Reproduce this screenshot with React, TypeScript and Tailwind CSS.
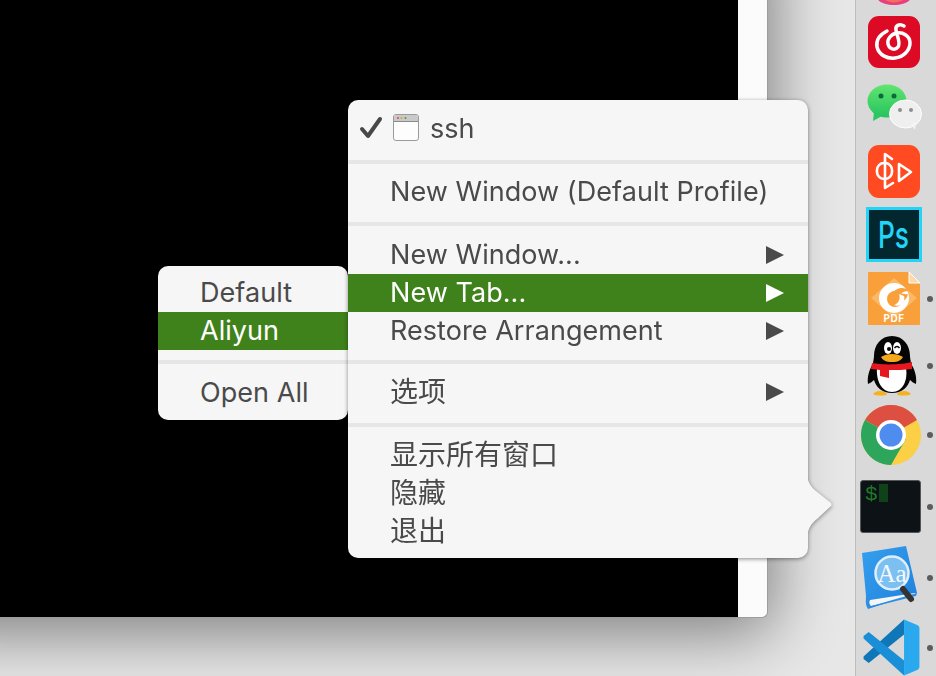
const menuFont = "font-['Inter','Noto_Sans_CJK_SC',sans-serif]";

function Arrow() {
  return (
    <svg width="18" height="18" viewBox="0 0 18 18" className="fill-current">
      <polygon points="0,0 18,9 0,18" />
    </svg>
  );
}

function MenuRow({ label, active, arrow, cjk, raised }: { label: string; active?: boolean; arrow?: boolean; cjk?: boolean; raised?: boolean }) {
  return (
    <div
      className={`flex h-[38px] items-center justify-between pl-[42px] pr-[24px] ${
        active ? 'bg-[#3f821c] text-white' : 'text-[#4a4a4a]'
      }`}
    >
      <span className={`${cjk ? 'text-[28px]' : 'tracking-[0.05px]'} ${raised ? 'mb-[2px]' : ''}`}>{label}</span>
      {arrow && <Arrow />}
    </div>
  );
}

function Separator({ className }: { className: string }) {
  return (
    <div className={className}>
      <div className="h-[4px] bg-[#e6e6e6]" />
    </div>
  );
}

function WindowGlyph() {
  return (
    <svg width="28" height="28" viewBox="0 0 28 28">
      <rect x="1.5" y="0.5" width="25" height="26" rx="2.5" fill="#fdfdfd" stroke="#9b9b9b" />
      <path d="M2 7V3a2 2 0 0 1 2-2h20a2 2 0 0 1 2 2v4z" fill="#c9c9c9" />
      <rect x="2" y="7" width="24" height="1" fill="#8b8b8b" />
      <circle cx="6" cy="4" r="1" fill="#e5484d" />
      <circle cx="9.5" cy="4" r="1" fill="#d9a23a" />
      <circle cx="13.5" cy="4" r="1" fill="#4f9d3a" />
    </svg>
  );
}

function MainMenu() {
  return (
    <div className={`absolute left-[348px] top-[100px] w-[460px] drop-shadow-[0_1px_2px_rgba(0,0,0,0.45)] ${menuFont} text-[27px] leading-none`}>
      <div className="rounded-[10px] bg-[#f6f6f6] pb-[8px] pt-[9px]">
        <div className="flex h-[38px] items-center pl-[11px] text-[#4a4a4a]">
          <svg width="24" height="24" viewBox="0 0 24 24" fill="none" stroke="#484848" strokeWidth="4" strokeLinecap="round" strokeLinejoin="round">
            <path d="M3 13l6 7L21 3" />
          </svg>
          <span className="ml-[9px] flex"><WindowGlyph /></span>
          <span className="ml-[10px]">ssh</span>
        </div>
        <Separator className="h-[25px] pt-[13px]" />
        <MenuRow label="New Window (Default Profile)" />
        <Separator className="h-[26px] pt-[12px]" />
        <MenuRow label="New Window..." arrow raised />
        <MenuRow label="New Tab..." arrow active raised />
        <MenuRow label="Restore Arrangement" arrow raised />
        <Separator className="h-[23px] pt-[10px]" />
        <MenuRow label="选项" arrow cjk />
        <Separator className="h-[25px] pt-[12px]" />
        <MenuRow label="显示所有窗口" cjk />
        <MenuRow label="隐藏" cjk />
        <MenuRow label="退出" cjk />
      </div>
      <svg className="absolute left-[459px] top-[372px]" width="26" height="66" viewBox="0 0 26 66" fill="#f6f6f6">
        <path d="M0 0C0 10 4 15 9 19L24 31Q25 33 24 34L10 47C4 52 1 56 0 66z" />
      </svg>
    </div>
  );
}

function SubMenu() {
  return (
    <div className={`absolute left-[158px] top-[266px] w-[190px] rounded-[10px] bg-[#f6f6f6] pb-[9px] pt-[8px] ${menuFont} text-[27px] leading-none`}>
      <MenuRow label="Default" raised />
      <MenuRow label="Aliyun" active raised />
      <Separator className="h-[23px] pt-[10px]" />
      <MenuRow label="Open All" />
    </div>
  );
}

function TopIcon() {
  return (
    <svg width="38" height="6" viewBox="0 0 38 6" className="ml-[19px]">
      <path d="M0 0C4 4 11 6 19 6S34 4 38 0z" fill="#ea3f7e" />
      <path d="M8 0C12 2 15 3 19 3S26 2 30 0z" fill="#f2705c" />
    </svg>
  );
}

function NeteaseIcon() {
  return (
    <svg width="52" height="52" viewBox="0 0 52 52" fill="none">
      <rect width="52" height="52" rx="11" fill="#dd0a26" />
      <path d="M19 15C11 19 8 25 9 31C11 39 19 43 27 42C36 41 42 34 42 27C42 20 35 16 29 17C23 18 19 23 20 28C21 33 27 35 30 31C33 27 29 20 28 14C27 10 31 7 36 10" stroke="#fff" strokeWidth="3.5" strokeLinecap="round" />
    </svg>
  );
}

function WeChatIcon() {
  return (
    <svg width="56" height="46" viewBox="0 0 56 46">
      <defs>
        <linearGradient id="wechatGreen" x1="0" y1="0" x2="0" y2="1">
          <stop offset="0" stopColor="#62e56f" />
          <stop offset="1" stopColor="#25c35f" />
        </linearGradient>
      </defs>
      <ellipse cx="20" cy="17" rx="19.5" ry="16.5" fill="url(#wechatGreen)" />
      <path d="M7 28l-1 9 9-5z" fill="#2cc763" />
      <circle cx="14" cy="12" r="2.5" fill="#0d6b39" />
      <circle cx="27" cy="12" r="2.5" fill="#0d6b39" />
      <ellipse cx="38.5" cy="30" rx="16" ry="14" fill="#efefef" stroke="#fff" strokeWidth="1" />
      <path d="M44 40l4 6 1-8z" fill="#f4f4f4" />
      <circle cx="33" cy="26" r="2" fill="#8e8e8e" />
      <circle cx="44" cy="26" r="2" fill="#8e8e8e" />
    </svg>
  );
}

function VideoIcon() {
  return (
    <svg width="52" height="53" viewBox="0 0 52 53" fill="none">
      <rect width="52" height="53" rx="11" fill="#ff4a22" />
      <g stroke="#fff" strokeWidth="2.6" strokeLinejoin="round" strokeLinecap="round">
        <rect x="9" y="18" width="15" height="16" rx="7" />
        <path d="M24 14L17 9V43L25 38" />
        <path d="M31 19L43 27 31 36z" />
      </g>
    </svg>
  );
}

function PsIcon() {
  return (
    <svg width="56" height="55" viewBox="0 0 56 55">
      <rect x="1.5" y="1.5" width="53" height="52" fill="#03272f" stroke="#22d4f7" strokeWidth="3" />
      <text x="12" y="41" fontFamily="Inter, sans-serif" fontSize="37" fontWeight="500" fill="#22d4f7" textLength="31" lengthAdjust="spacingAndGlyphs">Ps</text>
    </svg>
  );
}

function PdfIcon() {
  return (
    <svg width="52" height="53" viewBox="0 0 52 53">
      <path d="M0 1a1 1 0 0 1 1-1h40l11 11v41a1 1 0 0 1-1 1H1a1 1 0 0 1-1-1z" fill="#f9a03a" />
      <path d="M41 0l11 11H41z" fill="#fbd9a8" stroke="#fff" strokeWidth="1" />
      <path d="M26 6L49 26 26 46 3 26z" fill="#fbb866" />
      <circle cx="26" cy="26" r="15" fill="#fff" />
      <circle cx="27" cy="27" r="8" fill="#f9a03a" />
      <path d="M25 20C30 15 37 15 41 19C37 19 34 20 33 22C36 21 38 23 40 22C39 27 35 30 32 31C35 26 31 21 25 20z" fill="#f9a03a" />
      <path d="M31 22C33 27 30 32 26 33C32 36 38 30 36 24z" fill="#fff" />
      <text x="26" y="50" textAnchor="middle" fontFamily="Inter, sans-serif" fontSize="10" fontWeight="700" fill="#fff" letterSpacing="0.5">PDF</text>
    </svg>
  );
}

function QqIcon() {
  return (
    <svg width="50" height="60" viewBox="0 0 50 60">
      <path d="M6 58C9 54 17 54 20 58C20 60 8 60 6 58z" fill="#f6b11c" />
      <path d="M44 58C41 54 33 54 30 58C30 60 42 60 44 58z" fill="#f6b11c" />
      <path d="M25 0C36 0 43 9 43 20C43 23 44 25 44 28C48 33 50 42 49 48C47 47 45 46 43 44C41 51 35 57 25 57C15 57 9 51 7 44C5 46 3 47 1 48C0 42 2 33 6 28C6 25 7 23 7 20C7 9 14 0 25 0z" fill="#050505" />
      <path d="M10 32H39C41 44 36 56 25 56C14 56 9 44 10 32z" fill="#fff" />
      <ellipse cx="21" cy="12" rx="4" ry="6" fill="#fff" />
      <ellipse cx="30" cy="12" rx="4" ry="6" fill="#fff" />
      <circle cx="22" cy="13" r="2" fill="#050505" />
      <path d="M27.5 12C29 10 31 10 32.5 12" stroke="#050505" strokeWidth="1.5" fill="none" />
      <path d="M14 21C20 17 30 17 36 21C33 26 28 26 25 26C22 26 17 26 14 21z" fill="#f6a81c" />
      <path d="M5 27C14 29 35 29 45 26L45 33C38 34 28 34 22 34V42L13 40V34C10 34 7 33 4 33z" fill="#e5171f" />
    </svg>
  );
}

function ChromeIcon() {
  return (
    <svg width="60" height="60" viewBox="0 0 60 60">
      <circle cx="30" cy="30" r="30" fill="#fbcf46" />
      <path d="M30 30L4 15A30 30 0 0 1 56 15z" fill="#dc4f41" />
      <path d="M30 30L4 15A30 30 0 0 0 30 60L45 34z" fill="#2da55a" />
      <circle cx="30" cy="30" r="15" fill="#fff" />
      <circle cx="30" cy="30" r="11.5" fill="#4e8cf0" />
    </svg>
  );
}

function TerminalIcon() {
  return (
    <div className="flex h-[53px] w-[61px] items-start gap-[2px] rounded-[3px] border border-[#555] bg-[#0c1215] pl-[4px] pt-[3px] font-['Liberation_Mono',monospace] text-[21px] leading-[22px] text-[#1e7a28]">
      <span className="w-[12px]">$</span>
      <div className="h-[18px] w-[9px] bg-[#0f4218]" />
    </div>
  );
}

function DictIcon() {
  return (
    <svg width="56" height="64" viewBox="0 0 56 64">
      <defs>
        <linearGradient id="dictBlue" x1="0" y1="0" x2="1" y2="1">
          <stop offset="0" stopColor="#35a0ee" />
          <stop offset="1" stopColor="#1f7fdc" />
        </linearGradient>
      </defs>
      <path d="M0 7L44 0 55 47 6 63C3 58 4 55 4 50z" fill="url(#dictBlue)" />
      <path d="M8 54L53 47 54 50 9 60C7 58 7 56 8 54z" fill="#f5f5f5" />
      <path d="M6 62L54 50 55 47 6 61z" fill="#2a8de6" />
      <circle cx="30" cy="27" r="16.5" fill="#7cc0f2" stroke="#dfeefa" strokeWidth="2.5" />
      <text x="30" y="36" textAnchor="middle" fontFamily="Liberation Serif, serif" fontSize="25" fill="#f3f9fe">Aa</text>
      <path d="M41 43L49 53" stroke="#333" strokeWidth="6" strokeLinecap="round" />
    </svg>
  );
}

function VsCodeIcon() {
  return (
    <svg width="57" height="57" viewBox="0 0 100 100">
      <path d="M72 1V27L10 77 1 70V66z" fill="#0f76b8" />
      <path d="M10 23L72 73V99L1 34V30z" fill="#1a8ed6" />
      <path d="M72 1L96 11Q99 13 99 16V84Q99 87 96 89L72 99z" fill="#2aa9ef" />
    </svg>
  );
}

const dot = 'absolute top-1/2 h-[6px] w-[6px] -translate-y-1/2 rounded-full bg-[#5c5c5c]';

function Dock() {
  return (
    <div className="flex h-full w-[81px] shrink-0 flex-col overflow-hidden border-l border-l-[#bdbdbd] bg-[#d9d9d9]">
      <TopIcon />
      <div className="ml-[12px] mt-[11px] flex"><NeteaseIcon /></div>
      <div className="ml-[11px] mt-[16px] flex"><WeChatIcon /></div>
      <div className="ml-[12px] mt-[15px] flex"><VideoIcon /></div>
      <div className="ml-[10px] mt-[9px] flex"><PsIcon /></div>
      <div className="relative ml-[12px] mt-[10px] flex w-[60px]"><PdfIcon /><div className={`${dot} left-[59px]`} /></div>
      <div className="relative ml-[11px] mt-[11px] flex w-[60px]"><QqIcon /><div className={`${dot} left-[60px]`} /></div>
      <div className="relative ml-[5px] mt-[9px] flex w-[66px]"><ChromeIcon /><div className={`${dot} left-[66px]`} /></div>
      <div className="relative ml-[4px] mt-[15px] flex w-[67px]"><TerminalIcon /><div className={`${dot} left-[67px]`} /></div>
      <div className="relative ml-[6px] mt-[13px] flex w-[65px]"><DictIcon /><div className={`${dot} left-[65px]`} /></div>
      <div className="relative ml-[7px] mt-[9px] flex w-[64px]"><VsCodeIcon /><div className={`${dot} left-[64px]`} /></div>
    </div>
  );
}

export default function App() {
  return (
    <div className="relative flex h-[676px] w-[936px] overflow-hidden bg-[#e6e7e6]">
      <div className="flex-1">
        <div className="flex h-[618px] w-[768px] overflow-hidden rounded-br-[6px] border-b border-r border-[#9c9c9c] bg-[#fbfbfb] shadow-[-34px_-24px_64px_40px_rgba(0,0,0,0.45)]">
          <div className="w-[738px] bg-black" />
        </div>
      </div>
      <Dock />
      <SubMenu />
      <MainMenu />
    </div>
  );
}
